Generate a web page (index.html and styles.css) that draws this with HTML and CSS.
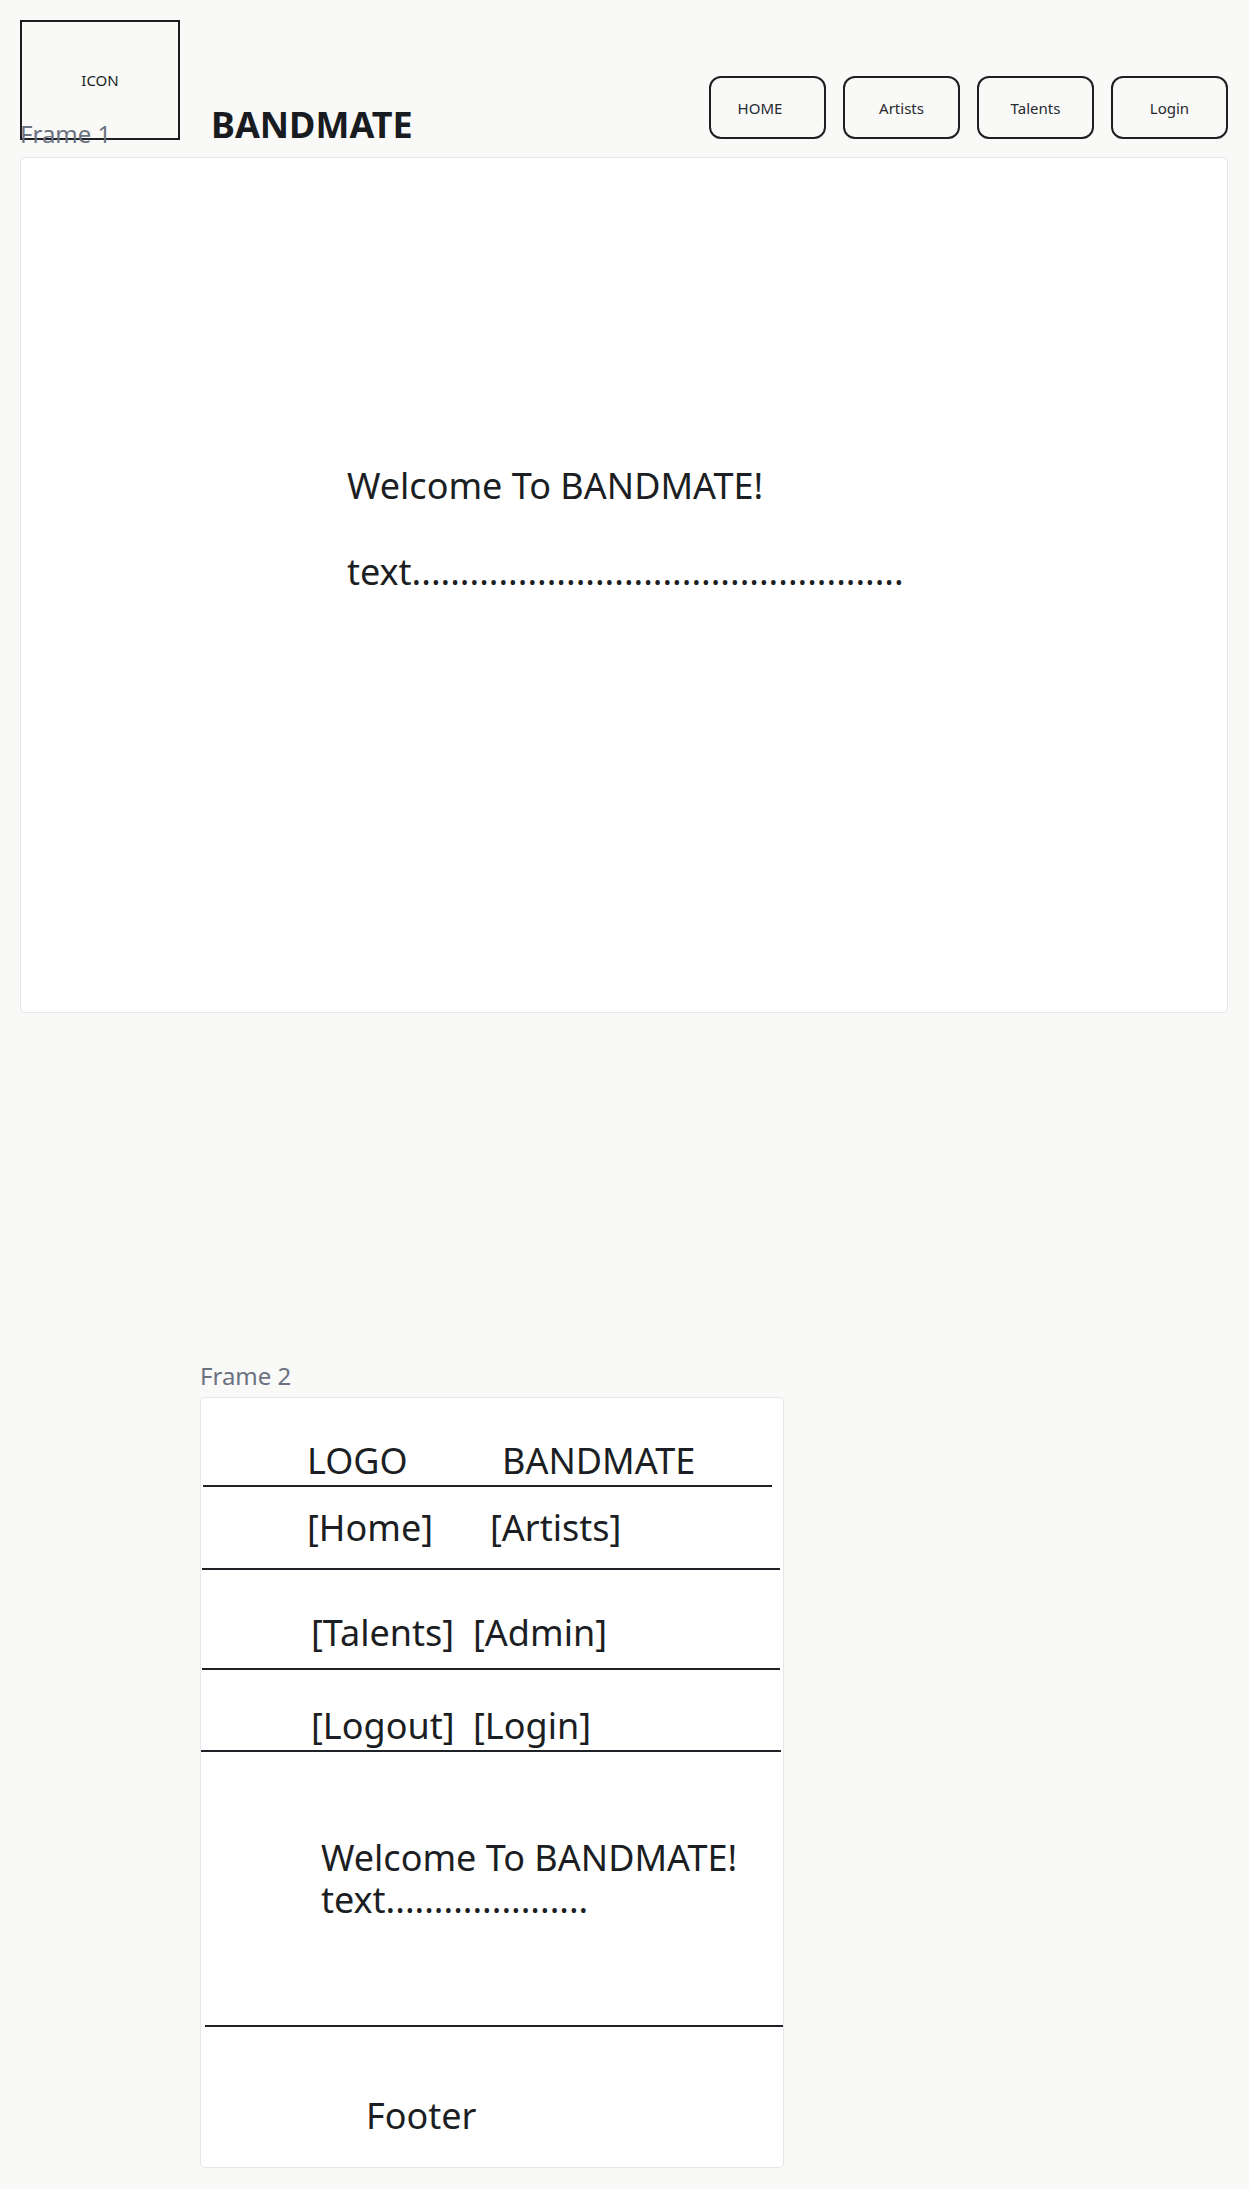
FILE: index.html
```html
<!DOCTYPE html>
<html lang="en">
<head>
<meta charset="utf-8">
<title>BANDMATE wireframe</title>
<link rel="stylesheet" href="styles.css">
</head>
<body>
<div class="canvas">
  <header class="topbar">
    <div class="icon-box">ICON</div>
    <div class="brand">BANDMATE</div>
    <nav class="nav">
      <div class="nav-btn nav-btn--home">HOME</div>
      <div class="nav-btn">Artists</div>
      <div class="nav-btn">Talents</div>
      <div class="nav-btn">Login</div>
    </nav>
  </header>

  <section class="frame frame-1">
    <div class="frame-label">Frame 1</div>
    <p class="hero-title">Welcome To BANDMATE!</p>
    <p class="hero-text">text...................................................</p>
  </section>

  <section class="frame frame-2">
    <div class="frame-label">Frame 2</div>
    <div class="m-row m-row--1"><span class="m-col m-col--1">LOGO</span><span>BANDMATE</span></div>
    <div class="m-row m-row--2"><span class="m-col m-col--2">[Home]</span><span>[Artists]</span></div>
    <div class="m-row m-row--3"><span class="m-col m-col--3">[Talents]</span><span>[Admin]</span></div>
    <div class="m-row m-row--4"><span class="m-col m-col--3">[Logout]</span><span>[Login]</span></div>
    <div class="m-content">
      <div class="m-line">Welcome To BANDMATE!</div>
      <div class="m-line">text.....................</div>
    </div>
    <div class="m-footer">Footer</div>
  </section>
</div>
</body>
</html>
```
FILE: styles.css
```css
* { box-sizing: border-box; }

html, body {
  margin: 0;
  padding: 0;
  background: #f9f9f8;
}

body {
  font-family: "Noto Sans", "Open Sans", sans-serif;
  color: #1b1e22;
}

.canvas {
  padding: 0 21px 0 20px;
}

/* ---------- top bar ---------- */
.topbar {
  display: flex;
  align-items: flex-start;
  height: 157px;
  padding-top: 20px;
}

.icon-box {
  width: 160px;
  height: 120px;
  border: 2px solid #1c1e21;
  display: flex;
  align-items: center;
  justify-content: center;
  font-size: 15px;
  line-height: 20px;
  color: #1b1e22;
}

.brand {
  margin-left: 31px;
  margin-top: 83px;
  font-size: 36px;
  line-height: 43px;
  font-weight: 700;
  color: #181b1f;
}

.nav {
  margin-left: auto;
  margin-top: 56px;
  display: flex;
  gap: 17px;
}

.nav-btn {
  width: 117px;
  height: 63px;
  border: 2px solid #1e1f22;
  border-radius: 12px;
  display: flex;
  align-items: center;
  justify-content: center;
  font-size: 15px;
  color: #26292d;
}

.nav-btn--home {
  padding-right: 15px;
}

/* ---------- frames ---------- */
.frame {
  position: relative;
  background: #ffffff;
  border: 1px solid #e4e6ea;
  border-radius: 5px;
}

.frame-label {
  position: absolute;
  left: -1px;
  bottom: 100%;
  margin-bottom: 8px;
  font-size: 24px;
  line-height: 28px;
  color: #6b7280;
  white-space: nowrap;
}

.frame-1 .frame-label {
  margin-bottom: 10px;
}

.frame-1 {
  height: 856px;
  padding: 303px 0 0 326px;
}

.hero-title,
.hero-text {
  margin: 0;
  font-size: 36px;
  line-height: 49px;
  color: #1b1e22;
}

.hero-text {
  margin-top: 37px;
}

.frame-2 {
  margin-top: 384px;
  margin-left: 180px;
  width: 584px;
  height: 771px;
  display: flex;
  flex-direction: column;
  font-size: 36px;
  line-height: 49px;
}

.m-row {
  display: flex;
  border-bottom: 2px solid #1f2226;
  white-space: nowrap;
}

.m-row--1 { margin: 0 11px 0 2px; padding: 38px 0 0 104px; }
.m-row--2 { margin: 0 3px 0 1px; padding: 16px 0 16px 105px; }
.m-row--3 { margin: 0 3px 0 1px; padding: 38px 0 11px 109px; }
.m-row--4 { margin: 0 2px 0 0; padding: 31px 0 0 110px; }

.m-col--1 { width: 195px; }
.m-col--2 { width: 183px; }
.m-col--3 { width: 162px; }

.m-content {
  margin: 0 0 0 4px;
  padding: 85px 0 104px 116px;
  border-bottom: 2px solid #1f2226;
  white-space: nowrap;
}

.m-line {
  height: 42px;
  line-height: 42px;
}

.m-footer {
  padding: 64px 0 0 165px;
}
```
